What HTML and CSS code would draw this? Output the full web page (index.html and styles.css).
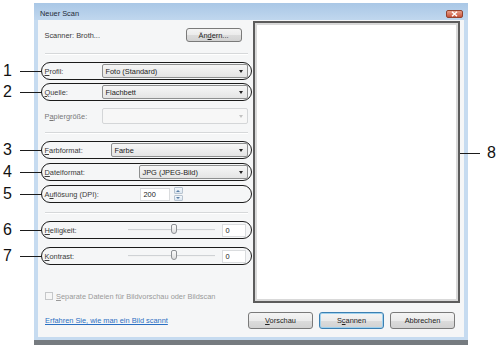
FILE: index.html
```html
<!DOCTYPE html>
<html lang="de">
<head>
  <meta charset="UTF-8">
  <title>Neuer Scan</title>
  <link rel="stylesheet" href="styles.css">
</head>
<body>
  <div class="stage">
    <div class="window">
      <!-- ▼ Titelleiste -->
      <header class="titlebar">
        <span class="title">Neuer Scan</span>
        <span class="close-btn">
          <svg width="7" height="6" viewBox="0 0 7 6"><path d="M1 0.8 L6 5.2 M6 0.8 L1 5.2" stroke="#fff" stroke-width="1.4"/></svg>
        </span>
      </header>

      <div class="client">
        <div class="main">
          <!-- ▼ Einstellungen -->
          <section class="settings">
            <div class="row scanner-row">
              <span class="label">Scanner: Broth...</span>
              <button class="btn btn-change">Än<u>d</u>ern...</button>
            </div>
            <div class="sep sep-top"></div>

            <div class="row marked r-profil">
              <span class="callout"><b>1</b><i></i></span>
              <span class="label"><u>P</u>rofil:</span>
              <span class="select w-146">Foto (Standard)<em class="arrow"></em></span>
            </div>
            <div class="row marked r-quelle">
              <span class="callout"><b>2</b><i></i></span>
              <span class="label"><u>Q</u>uelle:</span>
              <span class="select w-146">Flachbett<em class="arrow"></em></span>
            </div>
            <div class="row r-papier">
              <span class="label disabled">P<u>a</u>piergröße:</span>
              <span class="select w-146 is-disabled"><em class="arrow"></em></span>
            </div>
            <div class="sep sep-mid"></div>

            <div class="row marked r-farbe">
              <span class="callout"><b>3</b><i></i></span>
              <span class="label"><u>F</u>arbformat:</span>
              <span class="select w-137">Farbe<em class="arrow"></em></span>
            </div>
            <div class="row marked r-datei">
              <span class="callout"><b>4</b><i></i></span>
              <span class="label"><u>D</u>ateiformat:</span>
              <span class="select w-109">JPG (JPEG-Bild)<em class="arrow"></em></span>
            </div>
            <div class="row marked r-dpi">
              <span class="callout"><b>5</b><i></i></span>
              <span class="label w-95">A<u>u</u>flösung (DPI):</span>
              <span class="field w-30">200</span>
              <span class="spinner"><em class="up"></em><em class="down"></em></span>
            </div>
            <div class="sep sep-low"></div>

            <div class="row marked r-hell">
              <span class="callout"><b>6</b><i></i></span>
              <span class="label w-83"><u>H</u>elligkeit:</span>
              <span class="slider"><span class="thumb"></span></span>
              <span class="field w-24">0</span>
            </div>
            <div class="row marked r-kontrast">
              <span class="callout"><b>7</b><i></i></span>
              <span class="label w-83"><u>K</u>ontrast:</span>
              <span class="slider"><span class="thumb"></span></span>
              <span class="field w-24">0</span>
            </div>

            <label class="check-row">
              <span class="checkbox"></span>
              <span><u>S</u>eparate Dateien für Bildvorschau oder Bildscan</span>
            </label>
          </section>

          <!-- ▼ Vorschau -->
          <section class="preview">
            <span class="callout-right"><i></i><b>8</b></span>
          </section>
        </div>

        <footer class="footer">
          <a class="help-link" href="#">Erfahren Sie, wie man ein Bild scannt</a>
          <div class="actions">
            <button class="btn"><u>V</u>orschau</button>
            <button class="btn btn-default">S<u>c</u>annen</button>
            <button class="btn">Abbrechen</button>
          </div>
        </footer>
      </div>
    </div>
    <div class="taskbar-edge"></div>
  </div>
</body>
</html>
```

FILE: styles.css
```css
:root {
  --frame: #c6dbf0;
  --title-top: #a9c7e6;
  --title-bottom: #c0d7ee;
  --client: #f5f6f7;
  --text: #3a3a3a;
  --muted: #9a9a9a;
  --mark: #1b1b1b;
  --link: #2a6fc2;
  --ui-size: 7.4px;
}
html, body {
  margin: 0;
  padding: 0;
  background: #fff;
  font-family: "Liberation Sans", Arial, sans-serif;
  color: var(--text);
}
.stage {
  position: relative;
  width: 500px;
  height: 345px;
  overflow: hidden;
}

/* ───────── Fenster ───────── */
.window {
  margin: 3px 0 0 34px;
  width: 434px;
  height: 337px;
  box-sizing: border-box;
  padding: 0 4px 3px 4px;
  background: var(--frame);
  display: flex;
  flex-direction: column;
}
.titlebar {
  position: relative;
  height: 17px;
  margin: 0 -4px;
  padding: 0 0 2px 6px;
  display: flex;
  align-items: flex-end;
  box-sizing: border-box;
  background: linear-gradient(var(--title-top), var(--title-bottom));
}
.title {
  font-size: var(--ui-size);
  color: #1e2a38;
}
.close-btn {
  position: absolute;
  right: 5px;
  top: 7px;
  width: 17px;
  height: 8px;
  box-sizing: border-box;
  border: 1px solid #93432f;
  border-radius: 2px;
  background: linear-gradient(#e9a08a, #c7533a);
  display: flex;
  align-items: center;
  justify-content: center;
}
.close-btn svg { display: block; }
.client {
  flex: 1;
  background: var(--client);
  display: flex;
  flex-direction: column;
}
.main {
  display: flex;
  height: 283px;
}

/* ───────── Einstellungen ───────── */
.settings {
  width: 215px;
  padding-left: 3px;
  box-sizing: border-box;
  display: flex;
  flex-direction: column;
}
.row {
  position: relative;
  display: flex;
  align-items: center;
  box-sizing: border-box;
  width: 211px;
  height: 18px;
  padding: 0 3.5px 0 2.5px;
  border: 1.5px solid transparent;
  border-radius: 9px;
  flex: none;
}
.row.marked { border-color: var(--mark); }
.scanner-row { height: 14px; margin-top: 8px; }
.r-profil { margin-top: 7px; }
.r-quelle { margin-top: 3px; }
.r-papier { margin-top: 6px; }
.r-farbe { margin-top: 7px; }
.r-datei { margin-top: 4px; }
.r-dpi { margin-top: 4px; }
.r-hell { margin-top: 7px; }
.r-kontrast { margin-top: 8px; }

.label {
  flex: 1;
  font-size: var(--ui-size);
  white-space: nowrap;
}
.label.disabled { color: #777; }
.w-95 { flex: none; width: 95px; }
.w-83 { flex: none; width: 83px; }

.sep {
  margin-left: 4px;
  width: 203px;
  height: 0;
  border-top: 1px solid #d6d8da;
  border-bottom: 1px solid #fff;
}
.sep-top { margin-top: 11px; }
.sep-mid { margin-top: 7px; }
.sep-low { margin-top: 9px; }

/* Markierungen */
.callout {
  position: absolute;
  right: 100%;
  top: -2px;
  bottom: -2px;
  width: 39px;
  display: flex;
  align-items: center;
}
.callout b, .callout-right b {
  font-weight: normal;
  font-size: 16px;
  color: #111;
  width: 17px;
}
.callout i, .callout-right i {
  flex: 1;
  height: 1px;
  background: var(--mark);
}
.callout-right {
  position: absolute;
  left: 100%;
  top: 122px;
  width: 40px;
  height: 16px;
  margin-left: 2px;
  display: flex;
  align-items: center;
  gap: 7px;
}
.callout-right i { flex: none; width: 20px; }

/* Steuerelemente */
.btn {
  height: 17px;
  width: 65px;
  padding: 0;
  box-sizing: border-box;
  border: 1px solid #7a7a7a;
  border-radius: 3px;
  background: linear-gradient(#f4f4f4 0%, #ebebeb 50%, #dcdcdc 51%, #d2d2d2 100%);
  font-family: inherit;
  font-size: var(--ui-size);
  color: #222;
}
.btn-change {
  width: 56px;
  height: 14px;
  margin-right: 6px;
}
.btn-default {
  border-color: #3c7fb1;
  box-shadow: inset 0 0 0 1px #9fd1ee;
}
.select {
  position: relative;
  flex: none;
  height: 14px;
  box-sizing: border-box;
  padding-left: 3px;
  border: 1px solid #8e8f8f;
  border-radius: 2px;
  background: linear-gradient(#f6f6f6, #e4e4e4);
  font-size: var(--ui-size);
  color: #222;
  display: flex;
  align-items: center;
}
.select.is-disabled {
  height: 16px;
  border-color: #d4d6d8;
  background: #f7f7f7;
}
.w-146 { width: 146px; }
.w-137 { width: 137px; }
.w-109 { width: 109px; }
.arrow {
  position: absolute;
  right: 4px;
  top: 50%;
  margin-top: -1px;
  border-left: 2.5px solid transparent;
  border-right: 2.5px solid transparent;
  border-top: 3px solid #222;
}
.is-disabled .arrow { border-top-color: #c2c2c2; }

.field {
  flex: none;
  height: 13px;
  box-sizing: border-box;
  padding-left: 3px;
  border: 1px solid #dadcde;
  background: #fff;
  font-size: var(--ui-size);
  color: #222;
  display: flex;
  align-items: center;
}
.w-30 { width: 30px; }
.w-24 { width: 24px; margin-left: 7px; }
.spinner {
  margin-left: 4px;
  width: 9px;
  height: 14px;
  display: flex;
  flex-direction: column;
  gap: 1px;
}
.spinner em {
  flex: 1;
  border: 1px solid #b8c4d0;
  border-radius: 1px;
  background: linear-gradient(#f4f8fb, #dbe6f0);
  position: relative;
}
.spinner em::after {
  content: "";
  position: absolute;
  left: 1.5px;
  top: 1.5px;
  border-left: 2px solid transparent;
  border-right: 2px solid transparent;
}
.spinner .up::after { border-bottom: 2px solid #5a7fa6; }
.spinner .down::after { border-top: 2px solid #5a7fa6; }

.slider {
  position: relative;
  width: 87px;
  height: 2px;
  border-top: 1px solid #cfd2d5;
  border-bottom: 1px solid #f2f2f2;
  box-sizing: border-box;
}
.thumb {
  position: absolute;
  left: 43px;
  top: -6px;
  width: 6px;
  height: 10px;
  box-sizing: border-box;
  border: 1px solid #8d9094;
  border-radius: 2px 2px 3px 3px;
  background: linear-gradient(#fbfbfb, #dedede);
}

.check-row {
  margin: 26px 0 0 4px;
  height: 10px;
  display: flex;
  align-items: center;
  gap: 3px;
  font-size: var(--ui-size);
  color: var(--muted);
}
.checkbox {
  width: 8px;
  height: 8px;
  box-sizing: border-box;
  border: 1px solid #c5c7c9;
  background: #f6f6f6;
}

/* ───────── Vorschau ───────── */
.preview {
  position: relative;
  margin-top: 1px;
  width: 207px;
  height: 282px;
  box-sizing: border-box;
  border: 2px solid #5c5c5c;
  background: #fff;
  box-shadow: inset 0 0 0 2px #d9d9d9;
}

/* ───────── Fußzeile ───────── */
.footer {
  flex: 1;
  display: flex;
  align-items: center;
  padding-left: 7px;
}
.help-link {
  font-size: var(--ui-size);
  color: var(--link);
  text-decoration: underline;
}
.actions {
  margin-left: auto;
  margin-right: 9px;
  display: flex;
  gap: 6px;
}
.taskbar-edge {
  margin-left: 34px;
  width: 434px;
  height: 5px;
  background: #767b80;
}
```
